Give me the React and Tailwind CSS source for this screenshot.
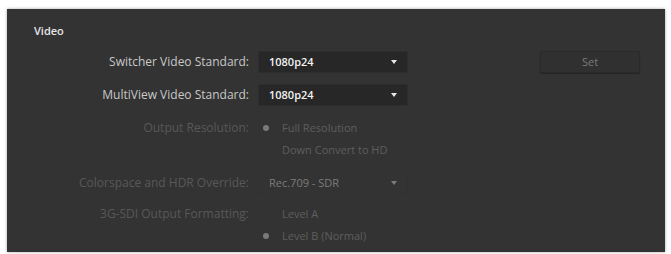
export default function App() {
  const font = { fontFamily: '"Open Sans", "Noto Sans", sans-serif' }

  return (
    <div className="w-[671px] h-[254px] bg-white pt-[9px] pl-[7px]" style={font}>
      <div className="w-[658px] h-[243px] bg-[#333333] shadow-[0_0_3px_rgba(0,0,0,0.35)] relative">

        {/* heading */}
        <div className="pl-[27px] pt-[14px] h-[33px] text-[11px] leading-[16px] text-[#e6e6e6] font-semibold">
          Video
        </div>

        {/* rows */}
        <div className="flex flex-col">
          <div className="flex items-center h-[22px] mt-[9px]">
            <div className="w-[242px] text-right text-[12px] text-[#c8c8c8]">Switcher Video Standard:</div>
            <div className="ml-[9px] w-[150px] h-[22px] flex items-center justify-between px-[10px] bg-[#272727] border border-[#2d2d2d] rounded-[2px]">
              <span className="text-[11px] font-semibold text-[#f2f2f2]">1080p24</span>
              <span className="w-0 h-0 border-l-[3px] border-r-[3px] border-t-[4px] border-l-transparent border-r-transparent border-t-[#e8e8e8]"></span>
            </div>
            <div className="ml-[132px] w-[100px] h-[22px] flex items-center justify-center bg-[#303030] border border-[#2a2a2a] rounded-[2px] shadow-[0_1px_1px_rgba(0,0,0,0.3)] text-[11px] text-[#7a7a7a]">
              Set
            </div>
          </div>

          <div className="flex items-center h-[22px] mt-[11px]">
            <div className="w-[242px] text-right text-[12px] text-[#c8c8c8]">MultiView Video Standard:</div>
            <div className="ml-[9px] w-[150px] h-[22px] flex items-center justify-between px-[10px] bg-[#272727] border border-[#2d2d2d] rounded-[2px]">
              <span className="text-[11px] font-semibold text-[#f2f2f2]">1080p24</span>
              <span className="w-0 h-0 border-l-[3px] border-r-[3px] border-t-[4px] border-l-transparent border-r-transparent border-t-[#e8e8e8]"></span>
            </div>
          </div>

          <div className="flex items-center h-[22px] mt-[11px]">
            <div className="w-[242px] text-right text-[12px] text-[#585858]">Output Resolution:</div>
            <div className="ml-[14px] w-[6px] h-[6px] rounded-full bg-[#7a7a7a]"></div>
            <div className="ml-[13px] text-[11px] text-[#5e5e5e]">Full Resolution</div>
          </div>

          <div className="flex items-center h-[22px]">
            <div className="w-[242px]"></div>
            <div className="ml-[33px] text-[11px] text-[#5e5e5e]">Down Convert to HD</div>
          </div>

          <div className="flex items-center h-[22px] mt-[11px]">
            <div className="w-[242px] text-right text-[12px] text-[#585858]">Colorspace and HDR Override:</div>
            <div className="ml-[9px] w-[150px] h-[22px] flex items-center justify-between px-[10px] border border-[#313131] rounded-[2px]">
              <span className="text-[11px] text-[#7c7c7c]">Rec.709 - SDR</span>
              <span className="w-0 h-0 border-l-[3px] border-r-[3px] border-t-[4px] border-l-transparent border-r-transparent border-t-[#7c7c7c]"></span>
            </div>
          </div>

          <div className="flex items-center h-[22px] mt-[9px]">
            <div className="w-[242px] text-right text-[12px] text-[#585858]">3G-SDI Output Formatting:</div>
            <div className="ml-[33px] text-[11px] text-[#5e5e5e]">Level A</div>
          </div>

          <div className="flex items-center h-[22px]">
            <div className="w-[242px]"></div>
            <div className="ml-[14px] w-[6px] h-[6px] rounded-full bg-[#7a7a7a]"></div>
            <div className="ml-[13px] text-[11px] text-[#5e5e5e]">Level B (Normal)</div>
          </div>
        </div>

      </div>
    </div>
  )
}
